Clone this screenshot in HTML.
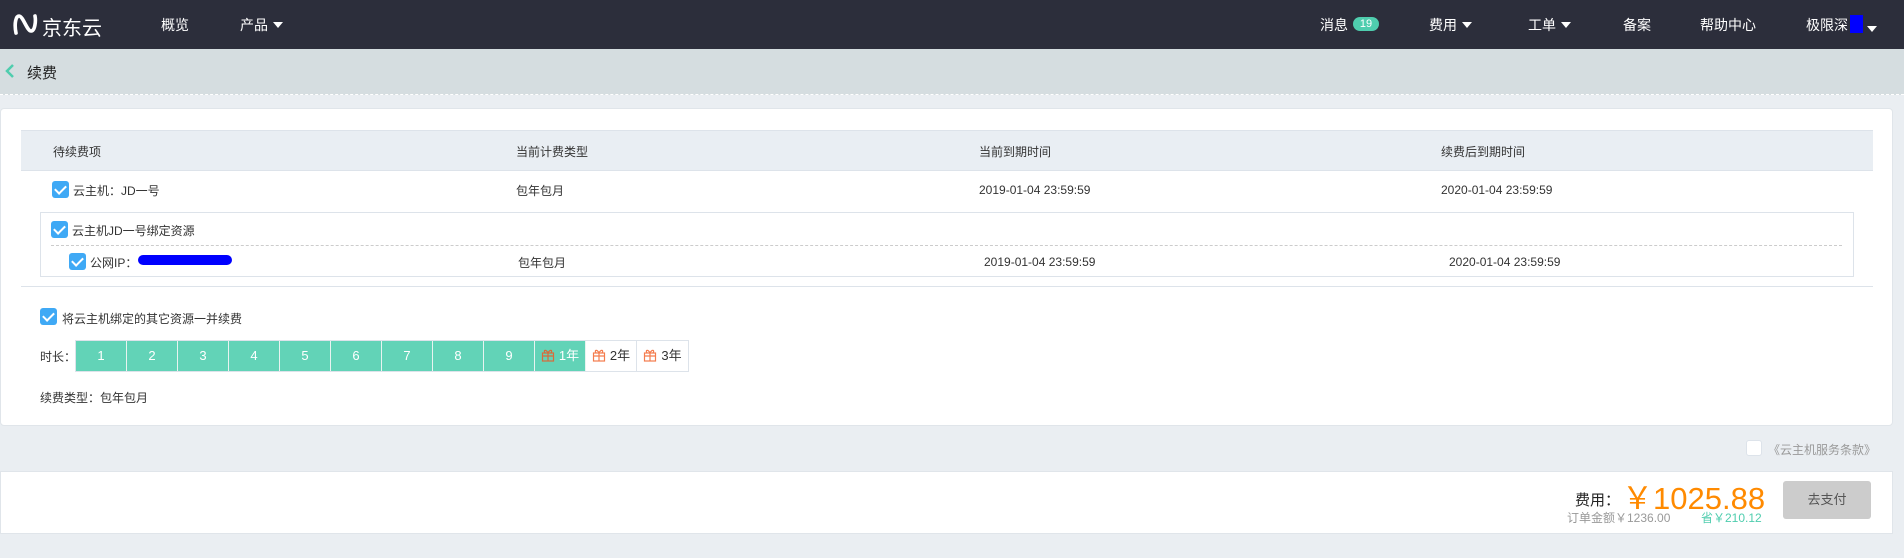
<!DOCTYPE html>
<html><head><meta charset="utf-8"><style>
*{margin:0;padding:0;box-sizing:border-box}
body{width:1904px;height:558px;background:#eaeef2;font-family:"Liberation Sans","Noto Sans CJK SC",sans-serif;position:relative;overflow:hidden;color:#333}
.a{position:absolute;white-space:nowrap}
.nav{left:0;top:0;width:1904px;height:49px;background:#2c2e3b}
.nv{color:#fff;font-size:14px;top:15px}
.tri{display:inline-block;width:0;height:0;border-left:5px solid transparent;border-right:5px solid transparent;border-top:6px solid #fff;margin-left:5px;vertical-align:2px}
.cb{position:absolute;width:17px;height:17px;background:#3fa9f5;border-radius:3px}
.cb:after{content:"";position:absolute;left:5px;top:2px;width:5px;height:9px;border:solid #fff;border-width:0 2px 2px 0;transform:rotate(45deg)}
.t13{font-size:12px;color:#333}
.cell{position:absolute;top:341px;height:30px;width:51px;background:#62d3b7;color:#fff;font-size:13px;text-align:center;line-height:30px;border-right:1px solid #e8f3f0}
</style></head><body>
<div class="a nav"></div>
<svg class="a" style="left:13px;top:13px" width="26" height="23" viewBox="0 0 26 23"><path d="M3 20 C1 10 3 3 6 3 C10 3 14 18 18 18 C22 18 23 8 22 3" fill="none" stroke="#fff" stroke-width="3.6" stroke-linecap="round"/></svg>
<div class="a" style="left:42px;top:12px;color:#fff;font-size:20px">京东云</div>
<div class="a nv" style="left:161px">概览</div>
<div class="a nv" style="left:240px">产品<span class="tri"></span></div>
<div class="a nv" style="left:1320px">消息</div>
<div class="a" style="left:1353px;top:17px;width:26px;height:14px;border-radius:7px;background:#4fcdae;color:#fff;font-size:11px;text-align:center;line-height:14px">19</div>
<div class="a nv" style="left:1429px">费用<span class="tri"></span></div>
<div class="a nv" style="left:1528px">工单<span class="tri"></span></div>
<div class="a nv" style="left:1623px">备案</div>
<div class="a nv" style="left:1700px">帮助中心</div>
<div class="a nv" style="left:1806px">极限深</div>
<div class="a" style="left:1850px;top:15px;width:13px;height:18px;background:#00f"></div>
<div class="a" style="left:1867px;top:21px"><span class="tri" style="margin:0"></span></div>
<div class="a" style="left:0;top:49px;width:1904px;height:46px;background:#d5dde0;border-bottom:1px dashed #fff"></div>
<svg class="a" style="left:5px;top:64px" width="10" height="14"><path d="M8 1 L2 7 L8 13" fill="none" stroke="#4fcdae" stroke-width="2.5"/></svg>
<div class="a" style="left:27px;top:62px;font-size:15px;color:#222">续费</div>
<div class="a" style="left:0;top:108px;width:1893px;height:318px;background:#fff;border-radius:4px;border:1px solid #e0e5ea"></div>
<div class="a" style="left:21px;top:130px;width:1852px;height:41px;background:#e9eef3;border-top:1px solid #dde3ea;border-bottom:1px solid #dde3ea"></div>
<div class="a t13" style="left:53px;top:143px">待续费项</div>
<div class="a t13" style="left:516px;top:143px">当前计费类型</div>
<div class="a t13" style="left:979px;top:143px">当前到期时间</div>
<div class="a t13" style="left:1441px;top:143px">续费后到期时间</div>
<div class="cb" style="left:52px;top:181px"></div>
<div class="a t13" style="left:73px;top:182px">云主机：JD一号</div>
<div class="a t13" style="left:516px;top:182px">包年包月</div>
<div class="a t13" style="left:979px;top:183px">2019-01-04 23:59:59</div>
<div class="a t13" style="left:1441px;top:183px">2020-01-04 23:59:59</div>
<div class="a" style="left:40px;top:212px;width:1814px;height:65px;border:1px solid #dde3ea"></div>
<div class="cb" style="left:51px;top:221px"></div>
<div class="a t13" style="left:72px;top:222px">云主机JD一号绑定资源</div>
<div class="a" style="left:51px;top:245px;width:1791px;border-top:1px dashed #ccc"></div>
<div class="cb" style="left:69px;top:253px"></div>
<div class="a t13" style="left:90px;top:254px">公网IP：</div>
<div class="a" style="left:138px;top:255px;width:94px;height:10px;background:#00f;border-radius:5px"></div>
<div class="a t13" style="left:518px;top:254px">包年包月</div>
<div class="a t13" style="left:984px;top:255px">2019-01-04 23:59:59</div>
<div class="a t13" style="left:1449px;top:255px">2020-01-04 23:59:59</div>
<div class="a" style="left:21px;top:286px;width:1852px;border-top:1px solid #dde3ea"></div>
<div class="cb" style="left:40px;top:308px"></div>
<div class="a t13" style="left:62px;top:310px">将云主机绑定的其它资源一并续费</div>
<div class="a t13" style="left:40px;top:348px">时长：</div>
<div class="a" style="left:75px;top:340px;width:614px;height:32px;border:1px solid #dde3ea"></div>
<div class="cell" style="left:76px">1</div><div class="cell" style="left:127px">2</div><div class="cell" style="left:178px">3</div><div class="cell" style="left:229px">4</div><div class="cell" style="left:280px">5</div><div class="cell" style="left:331px">6</div><div class="cell" style="left:382px">7</div><div class="cell" style="left:433px">8</div><div class="cell" style="left:484px">9</div>
<div class="cell" style="left:535px">&#8203;<svg width="14" height="14" style="vertical-align:-2px;margin-right:4px"><g fill="none" stroke="#d86b3a" stroke-width="1.2"><rect x="1.5" y="5" width="11" height="8"/><path d="M1.5 8H12.5M7 5V13M7 5C5 1 2 2 4 5M7 5C9 1 12 2 10 5"/></g></svg>1年</div>
<div class="cell" style="left:586px;background:#fff;color:#333;border-right:1px solid #dde3ea">&#8203;<svg width="14" height="14" style="vertical-align:-2px;margin-right:4px"><g fill="none" stroke="#f47c4e" stroke-width="1.2"><rect x="1.5" y="5" width="11" height="8"/><path d="M1.5 8H12.5M7 5V13M7 5C5 1 2 2 4 5M7 5C9 1 12 2 10 5"/></g></svg>2年</div>
<div class="cell" style="left:637px;background:#fff;color:#333;border-right:0">&#8203;<svg width="14" height="14" style="vertical-align:-2px;margin-right:4px"><g fill="none" stroke="#f47c4e" stroke-width="1.2"><rect x="1.5" y="5" width="11" height="8"/><path d="M1.5 8H12.5M7 5V13M7 5C5 1 2 2 4 5M7 5C9 1 12 2 10 5"/></g></svg>3年</div>
<div class="a t13" style="left:40px;top:389px">续费类型：包年包月</div>
<div class="a" style="left:1746px;top:440px;width:16px;height:16px;background:#fff;border:1px solid #dde3ea;border-radius:3px"></div>
<div class="a" style="left:1768px;top:441px;font-size:12px;color:#999">《云主机服务条款》</div>
<div class="a" style="left:0;top:471px;width:1893px;height:63px;background:#fff;border:1px solid #e0e5ea"></div>
<div class="a" style="left:1575px;top:489px;font-size:15px;color:#222">费用：</div>
<div class="a" style="left:1622px;top:473px;font-size:31px;color:#ff8a00">￥1025.88</div>
<div class="a" style="left:1567px;top:509px;font-size:12px;color:#999">订单金额￥1236.00</div>
<div class="a" style="left:1701px;top:509px;font-size:12px;color:#4fcdae">省￥210.12</div>
<div class="a" style="left:1783px;top:481px;width:88px;height:38px;background:#ccc;border-radius:3px;color:#555;font-size:13px;text-align:center;line-height:38px">去支付</div>
</body></html>
